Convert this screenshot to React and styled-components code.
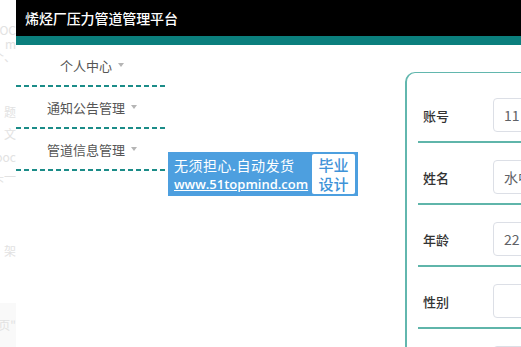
import React from 'react';
import styled, { createGlobalStyle } from 'styled-components';

const GlobalStyle = createGlobalStyle`
  html, body {
    margin: 0;
    padding: 0;
    background: #fff;
    overflow: hidden;
  }
  * {
    box-sizing: border-box;
  }
  body {
    font-family: "Noto Sans CJK SC", "Noto Sans", sans-serif;
  }
`;

const Page = styled.div`
  display: flex;
  width: 521px;
  height: 347px;
  overflow: hidden;
  position: relative;
`;

const Ghost = styled.div`
  width: 16px;
  flex-shrink: 0;
  overflow: hidden;
  display: flex;
  flex-direction: column;
  background: #fff;
`;

const GhostLine = styled.div`
  display: flex;
  justify-content: flex-end;
  height: ${({ $h }) => $h}px;
  align-items: center;
  overflow: hidden;
  white-space: nowrap;
  font-size: 12px;
  line-height: 1;
  color: #e2e2e2;
  background: ${({ $shade }) => ($shade ? '#f9f9f9' : 'transparent')};
`;

const Main = styled.div`
  flex: 1;
  display: flex;
  flex-direction: column;
  min-width: 0;
`;

const Header = styled.div`
  height: 45px;
  background: #000;
  border-bottom: 9px solid #0b7f7d;
  display: flex;
  align-items: center;
  padding-left: 9px;
  flex-shrink: 0;
`;

const Title = styled.div`
  color: #fff;
  font-size: 14px;
  font-weight: 500;
  letter-spacing: -0.1px;
`;

const Body = styled.div`
  flex: 1;
  display: flex;
  min-height: 0;
`;

const Sidebar = styled.div`
  width: 152px;
  flex-shrink: 0;
  display: flex;
  flex-direction: column;
`;

const MenuItem = styled.div`
  height: 42px;
  display: flex;
  align-items: center;
  justify-content: center;
  font-size: 13px;
  color: #555;
  padding-bottom: 2px;
  position: relative;

  &::after {
    content: '';
    position: absolute;
    left: 0;
    right: 0;
    bottom: 0;
    height: 2px;
    background: repeating-linear-gradient(
      to right,
      #1b8c88 0 5px,
      transparent 5px 8px
    );
  }
`;

const Caret = styled.span`
  display: inline-block;
  margin-left: 6px;
  width: 0;
  height: 0;
  border-left: 3px solid transparent;
  border-right: 3px solid transparent;
  border-top: 4px solid #b5b5b5;
`;

const Content = styled.div`
  flex: 1;
  padding: 27px 0 0 237px;
  min-width: 0;
`;

const Card = styled.div`
  width: 400px;
  border: 1px solid #62b7ae;
  border-left-width: 2px;
  border-radius: 10px;
  padding: 8px 0 0 11px;
`;

const Row = styled.div`
  display: flex;
  align-items: center;
  padding: 17px 0 9px;
  border-bottom: 2px solid #5fb5aa;
`;

const Label = styled.div`
  width: 75px;
  padding-left: 5px;
  font-size: 13px;
  color: #333;
  font-weight: 500;
`;

const Input = styled.div`
  flex: 1;
  height: 34px;
  border: 1px solid #dcdfe6;
  border-radius: 4px;
  display: flex;
  align-items: center;
  padding-left: 10px;
  font-size: 14px;
  color: #606266;
`;

const Banner = styled.div`
  position: absolute;
  left: 168px;
  top: 152px;
  width: 190px;
  height: 44px;
  background: #4d9fdf;
  display: flex;
  align-items: center;
  padding: 0 3px 0 6px;
  gap: 4px;
`;

const BannerText = styled.div`
  flex: 1;
  display: flex;
  flex-direction: column;
  color: #fff;
  line-height: 1;
`;

const BannerSlogan = styled.div`
  font-size: 14px;
  margin-bottom: 6px;
  letter-spacing: 0.5px;
`;

const BannerLink = styled.div`
  font-family: "Open Sans", "Liberation Sans", sans-serif;
  font-size: 13px;
  font-weight: 600;
  text-decoration: underline;
`;

const Badge = styled.div`
  width: 49px;
  height: 40px;
  background: #fff;
  border-radius: 2px;
  color: #3f93d8;
  font-size: 15px;
  font-weight: 500;
  line-height: 19px;
  display: flex;
  flex-direction: column;
  align-items: center;
  justify-content: center;
`;

const ghostLines = [
  { h: 22, t: '' },
  { h: 16, t: 'OOC' },
  { h: 13, t: 'm' },
  { h: 13, t: '个、' },
  { h: 40, t: '' },
  { h: 20, t: '题' },
  { h: 24, t: '文' },
  { h: 22, t: 'ooc' },
  { h: 20, t: '头一' },
  { h: 55, t: '' },
  { h: 20, t: '架' },
  { h: 42, t: '' },
  { h: 45, t: '页"', shade: true },
];

const menus = ['个人中心', '通知公告管理', '管道信息管理'];

const fields = [
  { label: '账号', value: '11' },
  { label: '姓名', value: '水中月' },
  { label: '年龄', value: '22' },
  { label: '性别', value: '' },
  { label: '电话', value: '' },
];

const App = () => {
  return (
    <>
      <GlobalStyle />
      <Page>
        <Ghost>
          {ghostLines.map((g, i) => (
            <GhostLine key={i} $h={g.h} $shade={g.shade}>
              {g.t}
            </GhostLine>
          ))}
        </Ghost>
        <Main>
          <Header>
            <Title>烯烃厂压力管道管理平台</Title>
          </Header>
          <Body>
            <Sidebar>
              {menus.map((m) => (
                <MenuItem key={m}>
                  {m}
                  <Caret />
                </MenuItem>
              ))}
            </Sidebar>
            <Content>
              <Card>
                {fields.map((f) => (
                  <Row key={f.label}>
                    <Label>{f.label}</Label>
                    <Input>{f.value}</Input>
                  </Row>
                ))}
              </Card>
            </Content>
          </Body>
        </Main>
        <Banner>
          <BannerText>
            <BannerSlogan>无须担心.自动发货</BannerSlogan>
            <BannerLink>www.51topmind.com</BannerLink>
          </BannerText>
          <Badge>
            <span>毕业</span>
            <span>设计</span>
          </Badge>
        </Banner>
      </Page>
    </>
  );
};

export default App;
